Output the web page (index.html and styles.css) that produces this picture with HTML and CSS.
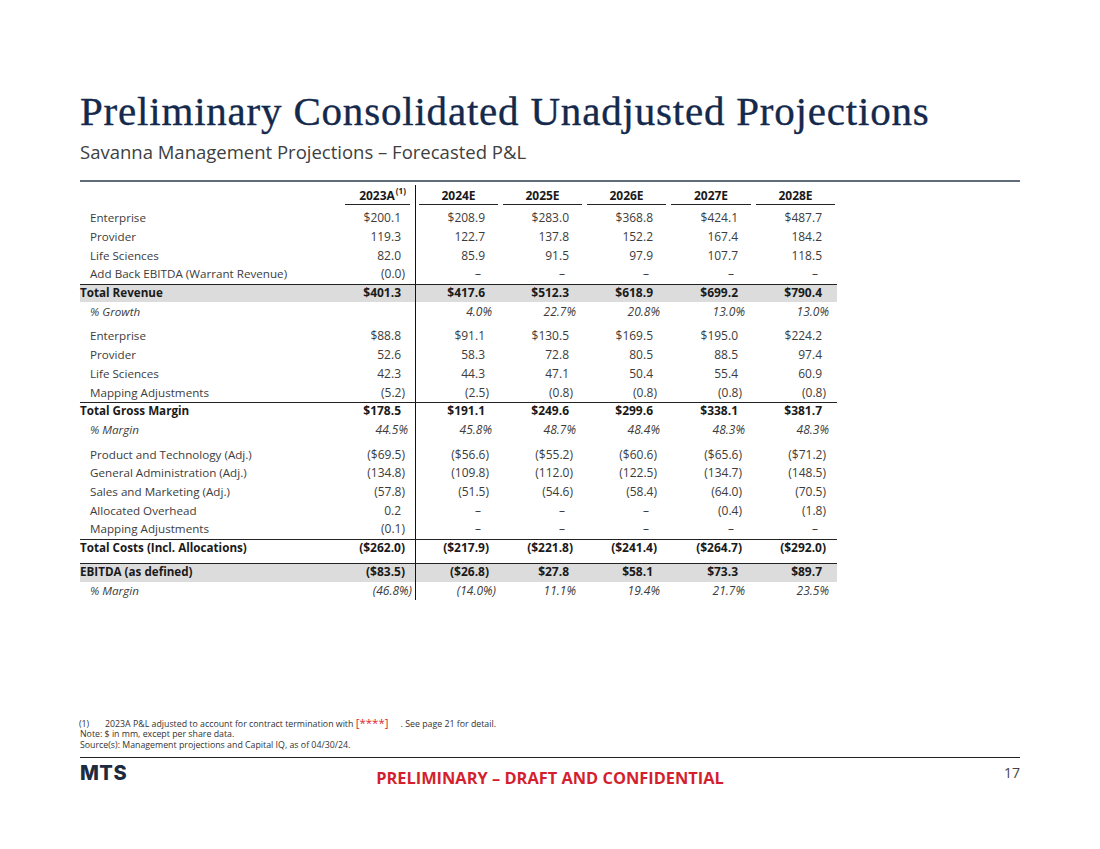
FILE: index.html
```html
<!DOCTYPE html>
<html lang="en">
<head>
<meta charset="utf-8">
<title>Preliminary Consolidated Unadjusted Projections</title>
<link rel="stylesheet" href="styles.css">
</head>
<body>
<div class="slide">
  <h1 class="title">Preliminary Consolidated Unadjusted Projections</h1>
  <div class="subtitle">Savanna Management Projections – Forecasted P&amp;L</div>
  <div class="rule"></div>

  <table class="pl">
    <colgroup>
      <col class="c-lbl"><col class="c-a"><col class="c-e"><col class="c-e"><col class="c-e"><col class="c-e5"><col class="c-e">
    </colgroup>
    <thead>
      <tr>
        <th></th>
        <th><div class="h h-a">2023A<sup class="fn">(1)</sup></div></th>
        <th><div class="h">2024E</div></th>
        <th><div class="h">2025E</div></th>
        <th><div class="h">2026E</div></th>
        <th><div class="h">2027E</div></th>
        <th><div class="h">2028E</div></th>
      </tr>
    </thead>
    <tbody>
      <tr><td class="lbl">Enterprise</td><td class="n">$200.1</td><td class="n">$208.9</td><td class="n">$283.0</td><td class="n">$368.8</td><td class="n">$424.1</td><td class="n">$487.7</td></tr>
      <tr><td class="lbl">Provider</td><td class="n">119.3</td><td class="n">122.7</td><td class="n">137.8</td><td class="n">152.2</td><td class="n">167.4</td><td class="n">184.2</td></tr>
      <tr><td class="lbl">Life Sciences</td><td class="n">82.0</td><td class="n">85.9</td><td class="n">91.5</td><td class="n">97.9</td><td class="n">107.7</td><td class="n">118.5</td></tr>
      <tr><td class="lbl">Add Back EBITDA (Warrant Revenue)</td><td class="n ng">(0.0)</td><td class="n d">–</td><td class="n d">–</td><td class="n d">–</td><td class="n d">–</td><td class="n d">–</td></tr>
      <tr class="tot top band"><td class="lbl">Total Revenue</td><td class="n">$401.3</td><td class="n">$417.6</td><td class="n">$512.3</td><td class="n">$618.9</td><td class="n">$699.2</td><td class="n">$790.4</td></tr>
      <tr class="pct"><td class="lbl">% Growth</td><td class="n"></td><td class="n">4.0%</td><td class="n">22.7%</td><td class="n">20.8%</td><td class="n">13.0%</td><td class="n">13.0%</td></tr>
      <tr class="gap"><td></td><td></td><td></td><td></td><td></td><td></td><td></td></tr>

      <tr><td class="lbl">Enterprise</td><td class="n">$88.8</td><td class="n">$91.1</td><td class="n">$130.5</td><td class="n">$169.5</td><td class="n">$195.0</td><td class="n">$224.2</td></tr>
      <tr><td class="lbl">Provider</td><td class="n">52.6</td><td class="n">58.3</td><td class="n">72.8</td><td class="n">80.5</td><td class="n">88.5</td><td class="n">97.4</td></tr>
      <tr><td class="lbl">Life Sciences</td><td class="n">42.3</td><td class="n">44.3</td><td class="n">47.1</td><td class="n">50.4</td><td class="n">55.4</td><td class="n">60.9</td></tr>
      <tr><td class="lbl">Mapping Adjustments</td><td class="n ng">(5.2)</td><td class="n ng">(2.5)</td><td class="n ng">(0.8)</td><td class="n ng">(0.8)</td><td class="n ng">(0.8)</td><td class="n ng">(0.8)</td></tr>
      <tr class="tot top"><td class="lbl">Total Gross Margin</td><td class="n">$178.5</td><td class="n">$191.1</td><td class="n">$249.6</td><td class="n">$299.6</td><td class="n">$338.1</td><td class="n">$381.7</td></tr>
      <tr class="pct"><td class="lbl">% Margin</td><td class="n">44.5%</td><td class="n">45.8%</td><td class="n">48.7%</td><td class="n">48.4%</td><td class="n">48.3%</td><td class="n">48.3%</td></tr>
      <tr class="gap"><td></td><td></td><td></td><td></td><td></td><td></td><td></td></tr>

      <tr><td class="lbl">Product and Technology (Adj.)</td><td class="n ng">($69.5)</td><td class="n ng">($56.6)</td><td class="n ng">($55.2)</td><td class="n ng">($60.6)</td><td class="n ng">($65.6)</td><td class="n ng">($71.2)</td></tr>
      <tr><td class="lbl">General Administration (Adj.)</td><td class="n ng">(134.8)</td><td class="n ng">(109.8)</td><td class="n ng">(112.0)</td><td class="n ng">(122.5)</td><td class="n ng">(134.7)</td><td class="n ng">(148.5)</td></tr>
      <tr><td class="lbl">Sales and Marketing (Adj.)</td><td class="n ng">(57.8)</td><td class="n ng">(51.5)</td><td class="n ng">(54.6)</td><td class="n ng">(58.4)</td><td class="n ng">(64.0)</td><td class="n ng">(70.5)</td></tr>
      <tr><td class="lbl">Allocated Overhead</td><td class="n">0.2</td><td class="n d">–</td><td class="n d">–</td><td class="n d">–</td><td class="n ng">(0.4)</td><td class="n ng">(1.8)</td></tr>
      <tr><td class="lbl">Mapping Adjustments</td><td class="n ng">(0.1)</td><td class="n d">–</td><td class="n d">–</td><td class="n d">–</td><td class="n d">–</td><td class="n d">–</td></tr>
      <tr class="tot top"><td class="lbl">Total Costs (Incl. Allocations)</td><td class="n ng">($262.0)</td><td class="n ng">($217.9)</td><td class="n ng">($221.8)</td><td class="n ng">($241.4)</td><td class="n ng">($264.7)</td><td class="n ng">($292.0)</td></tr>
      <tr class="gap gap-s"><td></td><td></td><td></td><td></td><td></td><td></td><td></td></tr>
      <tr class="tot top band"><td class="lbl">EBITDA (as defined)</td><td class="n ng">($83.5)</td><td class="n ng">($26.8)</td><td class="n">$27.8</td><td class="n">$58.1</td><td class="n">$73.3</td><td class="n">$89.7</td></tr>
      <tr class="pct"><td class="lbl">% Margin</td><td class="n ng">(46.8%)</td><td class="n ng">(14.0%)</td><td class="n">11.1%</td><td class="n">19.4%</td><td class="n">21.7%</td><td class="n">23.5%</td></tr>
    </tbody>
  </table>

  <div class="notes">
    <div class="note"><span class="note-num">(1)</span>2023A P&amp;L adjusted to account for contract termination with <span class="red">[****]</span><span class="note-gap"></span>. See page 21 for detail.</div>
    <div class="note">Note: $ in mm, except per share data.</div>
    <div class="note">Source(s): Management projections and Capital IQ, as of 04/30/24.</div>
  </div>
  <div class="foot-rule"></div>
  <footer class="footer">
    <div class="logo">MTS</div>
    <div class="conf">PRELIMINARY – DRAFT AND CONFIDENTIAL</div>
    <div class="page">17</div>
  </footer>
</div>
</body>
</html>
```

FILE: styles.css
```css
* { box-sizing: border-box; }

html, body {
  margin: 0;
  padding: 0;
  background: #ffffff;
}

body {
  font-family: "Open Sans", "Noto Sans", sans-serif;
  color: #3c3c3c;
}

.slide {
  width: 1100px;
  height: 849px;
  padding: 89px 80px 59px;
  display: flex;
  flex-direction: column;
}

.title {
  margin: 0;
  font-family: "Liberation Serif", "Times New Roman", serif;
  font-weight: 400;
  font-size: 41px;
  line-height: 44px;
  letter-spacing: 0.8px;
  color: #14294b;
  -webkit-text-stroke: 0.35px #14294b;
  white-space: nowrap;
}

.subtitle {
  margin-top: 7px;
  font-size: 18.5px;
  line-height: 24px;
  color: #404040;
}

.rule {
  margin-top: 16px;
  height: 2px;
  background: #5f6d7b;
}

/* ---------- P&L table ---------- */
.pl {
  margin-top: 3px;
  width: 757px;
  border-collapse: separate;
  border-spacing: 0;
  table-layout: fixed;
  font-size: 12px;
  color: #3c3c3c;
}

.c-lbl { width: 256px; }
.c-a { width: 80px; }
.c-e { width: 84px; }
.c-e5 { width: 85px; }

.pl th,
.pl td {
  padding: 0;
  height: 18.7px;
  line-height: 16px;
  white-space: nowrap;
  vertical-align: middle;
}

.pl thead th {
  height: auto;
  padding: 0 0 4px;
  vertical-align: bottom;
}

.h {
  margin: 0 2px 0 3px;
  padding-top: 2px;
  line-height: 16px;
  border-bottom: 1px solid #222;
  text-align: center;
  font-weight: 700;
  color: #1a1a1a;
}

.h-a {
  margin: 0 6px 0 9px;
}

.fn {
  display: inline-block;
  width: 0;
  font-size: 8px;
  line-height: 8px;
  vertical-align: 6px;
  padding-left: 1px;
}

/* vertical divider after 2023A */
.pl th:nth-child(2),
.pl td:nth-child(2) {
  box-shadow: inset -1px 0 0 #111;
}

.lbl {
  padding-left: 10px !important;
  text-align: left;
  font-size: 11.65px;
}

.n {
  text-align: right;
  padding-right: 15px !important;
}

.n.ng { padding-right: 11px !important; }
.n.d { padding-right: 19px !important; }

.pct td { font-style: italic; }
.pct .n { padding-right: 8px !important; }
.pct .n.ng { padding-right: 4px !important; }

.tot td {
  font-weight: 700;
  color: #1a1a1a;
}

.tot .lbl { padding-left: 0 !important; }

.top td {
  box-shadow: inset 0 1px 0 #222;
}

.top td:nth-child(2) {
  box-shadow: inset 0 1px 0 #222, inset -1px 0 0 #111;
}

.band td { background: #dcdcdc; }

.gap td { height: 6px; }
.gap-s td { height: 5.6px; }

/* ---------- notes & footer ---------- */
.notes {
  margin-top: auto;
  font-size: 8.8px;
  line-height: 10.5px;
  color: #333;
}

.note { white-space: nowrap; }

.note-num {
  display: inline-block;
  width: 26px;
  margin-left: -1px;
}

.red {
  color: #e0262e;
  font-size: 11.5px;
  line-height: 10px;
}

.note-gap {
  display: inline-block;
  width: 12px;
}

.foot-rule {
  margin-top: 7px;
  height: 1px;
  background: #222;
}

.footer {
  height: 32px;
  display: grid;
  grid-template-columns: 1fr auto 1fr;
  align-items: start;
}

.logo {
  margin-top: 4.7px;
  font-family: Inter, "Liberation Sans", sans-serif;
  font-weight: 800;
  font-size: 20px;
  line-height: 20px;
  letter-spacing: 0.5px;
  color: #1c2b3f;
}

.conf {
  margin-top: 9px;
  font-weight: 700;
  font-size: 16.4px;
  line-height: 22px;
  color: #d41f2e;
}

.page {
  margin-top: 4.6px;
  justify-self: end;
  font-size: 14px;
  line-height: 20px;
  color: #444;
}
```
